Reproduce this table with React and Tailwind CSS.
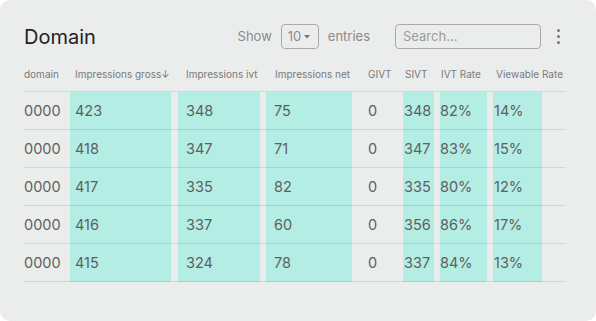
const ROWS = [
  { domain: '0000', gross: 423, ivt: 348, net: 75, givt: 0, sivt: 348, rate: '82%', view: '14%' },
  { domain: '0000', gross: 418, ivt: 347, net: 71, givt: 0, sivt: 347, rate: '83%', view: '15%' },
  { domain: '0000', gross: 417, ivt: 335, net: 82, givt: 0, sivt: 335, rate: '80%', view: '12%' },
  { domain: '0000', gross: 416, ivt: 337, net: 60, givt: 0, sivt: 356, rate: '86%', view: '17%' },
  { domain: '0000', gross: 415, ivt: 324, net: 78, givt: 0, sivt: 337, rate: '84%', view: '13%' },
]

const HEADERS = ['domain', 'Impressions gross↓', 'Impressions ivt', 'Impressions net', 'GIVT', 'SIVT', 'IVT Rate', 'Viewable Rate']

function Cell({ teal, className = '', children }) {
  return (
    <div
      className={`h-[38px] flex items-center border-b border-black/10 whitespace-nowrap ${
        teal ? 'bg-[#b3ede3]' : ''
      } ${className}`}
    >
      {children}
    </div>
  )
}

export default function App() {
  return (
    <div className="w-[596px] h-[321px] bg-white" style={{ fontFamily: 'Inter, "Noto Sans", sans-serif' }}>
      <div className="w-full h-full rounded-[10px] bg-[#ebedec] px-6 pt-6">
        {/* Top bar */}
        <div className="flex items-center h-[25px] w-[537px]">
          <h1 className="text-[20px] leading-none text-[#222] flex-1">Domain</h1>
          <span className="text-[13px] text-[#8a8a8a]">Show</span>
          <div className="ml-[9px] w-[38px] h-[25px] border border-[#a9a9a9] rounded-[4px] flex items-center pl-[6px] gap-[3px] text-[13px] text-[#8a8a8a]">
            10
            <svg width="6" height="4" viewBox="0 0 6 4" className="mt-px">
              <path d="M0 0 L6 0 L3 3.5 Z" fill="#777" />
            </svg>
          </div>
          <span className="ml-[9px] text-[13px] text-[#8a8a8a]">entries</span>
          <div className="ml-[25px] w-[146px] h-[25px] border border-[#a9a9a9] rounded-[4px] flex items-center pl-[7px] text-[13px] text-[#9b9b9b]">
            Search...
          </div>
          <div className="ml-[14px] w-[6px] flex flex-col items-center gap-[3px]">
            <span className="w-[3px] h-[3px] rounded-full bg-[#777]" />
            <span className="w-[3px] h-[3px] rounded-full bg-[#777]" />
            <span className="w-[3px] h-[3px] rounded-full bg-[#777]" />
          </div>
        </div>

        <div className="w-[541px]">
          {/* Header */}
          <div className="mt-[9px] h-[34px] grid grid-cols-[51px_111px_89px_93px_37px_36px_55px_69px] items-center border-b border-black/10 text-[10px] text-[#7a7a7a] whitespace-nowrap">
            {HEADERS.map(h => (
              <span key={h}>{h}</span>
            ))}
          </div>

          {/* Body */}
          {ROWS.map((r, i) => (
            <div
              key={i}
              className="grid grid-cols-[46px_101px_7px_82px_6px_86px_51px_31px_6px_47px_6px_49px_23px] text-[14.5px] text-[#5f5f5f]"
            >
              <Cell>{r.domain}</Cell>
              <Cell teal className="pl-[5px]">{r.gross}</Cell>
              <Cell />
              <Cell teal className="pl-[8px]">{r.ivt}</Cell>
              <Cell />
              <Cell teal className="pl-[8px]">{r.net}</Cell>
              <Cell className="pl-[16px]">{r.givt}</Cell>
              <Cell teal className="pl-px">{r.sivt}</Cell>
              <Cell />
              <Cell teal>{r.rate}</Cell>
              <Cell />
              <Cell teal className="pl-px">{r.view}</Cell>
              <Cell />
            </div>
          ))}
        </div>
      </div>
    </div>
  )
}
